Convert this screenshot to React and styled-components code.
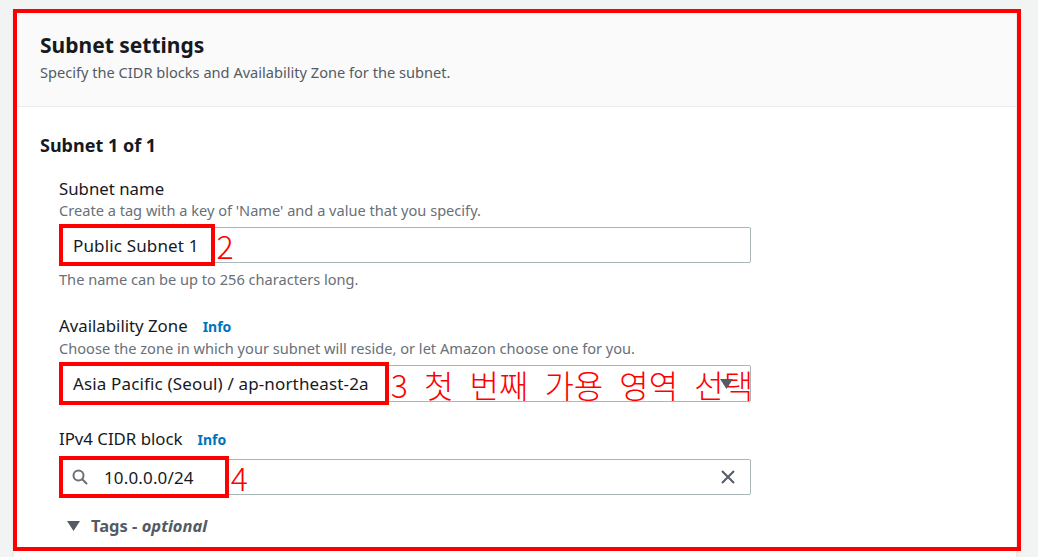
import React from "react";
import styled, { createGlobalStyle } from "styled-components";

const GlobalStyle = createGlobalStyle`
  html, body {
    margin: 0;
    padding: 0;
    background: #f2f3f3;
  }
  body {
    font-family: "Noto Sans", "Open Sans", sans-serif;
    color: #16191f;
  }
  * {
    box-sizing: border-box;
  }
`;

const Page = styled.div`
  position: relative;
  height: 557px;
  overflow: hidden;
  padding: 9px 0 0 13px;
  background: #f2f3f3;
`;

const Panel = styled.section`
  width: 1004px;
  min-height: 600px;
  background: #ffffff;
  border: 1px solid #eaeded;
  box-shadow: 0 1px 1px 0 rgba(0, 28, 36, 0.2);
`;

const Header = styled.header`
  background: #fafafa;
  border-bottom: 1px solid #eaeded;
  padding: 21px 26px 24px;
`;

const Title = styled.h2`
  margin: 0;
  font-size: 21px;
  line-height: 28px;
  font-weight: 700;
  color: #16191f;
`;

const Description = styled.p`
  margin: 3px 0 0;
  font-size: 14.6px;
  line-height: 20px;
  color: #545b64;
`;

const Body = styled.div`
  padding: 26px 26px 0;
`;

const SubTitle = styled.h3`
  margin: 0;
  font-size: 18px;
  line-height: 24px;
  font-weight: 700;
`;

const Fields = styled.div`
  display: flex;
  flex-direction: column;
  gap: 26px;
  padding: 21px 0 0 19px;
`;

const Field = styled.div`
  display: flex;
  flex-direction: column;
  width: 692px;
`;

const Label = styled.div`
  display: flex;
  align-items: baseline;
  font-size: 16.8px;
  line-height: 22px;
  color: #16191f;
`;

const Info = styled.span`
  margin-left: 15px;
  font-size: 14px;
  font-weight: 700;
  color: #0073bb;
`;

const Hint = styled.div`
  font-size: 14.6px;
  line-height: 20px;
  color: #687078;
`;

const Control = styled.div`
  position: relative;
  display: flex;
  align-items: center;
  height: ${(p) => p.$h || 36}px;
  margin-top: ${(p) => p.$mt || 7}px;
  border: 1px solid #aab7b8;
  border-radius: 2px;
  background: #ffffff;
  font-size: 17px;
  letter-spacing: 0.15px;
  color: #16191f;
`;

const Mark = styled.span`
  display: flex;
  align-items: center;
  gap: 16px;
  align-self: stretch;
  flex-shrink: 0;
  margin: -4px 0 -4px -1px;
  padding: 0 ${(p) => p.$pr}px 0 ${(p) => p.$pl || 10}px;
  border: 4px solid #ff0000;
  white-space: nowrap;
`;

const Note = styled.span`
  flex-shrink: 0;
  margin-left: 2px;
  font-family: "Noto Sans CJK KR", sans-serif;
  font-weight: 300;
  font-size: 32px;
  line-height: 32px;
  letter-spacing: 0;
  word-spacing: 9px;
  color: #ff0000;
  white-space: nowrap;
`;

const Trailing = styled.span`
  position: absolute;
  right: ${(p) => p.$r}px;
  top: 50%;
  transform: translateY(-50%);
  display: flex;
  z-index: 1;
`;

const Constraint = styled.div`
  margin-top: 6px;
  font-size: 14.6px;
  line-height: 20px;
  color: #687078;
`;

const Expander = styled.div`
  display: flex;
  align-items: center;
  gap: 11px;
  margin: 20px 0 0 27px;
  font-size: 16.5px;
  line-height: 22px;
  font-weight: 700;
  color: #545b64;

  em {
    font-style: italic;
  }
`;

const Frame = styled.div`
  position: absolute;
  top: 9px;
  left: 13px;
  width: 1008px;
  height: 542px;
  border: 4px solid #ff0000;
  pointer-events: none;
`;

function Caret({ w = 13, h = 10 }) {
  return (
    <svg width={w} height={h} viewBox="0 0 13 10">
      <path d="M0 0 H13 L6.5 10 Z" fill="#545b64" />
    </svg>
  );
}

function SearchIcon() {
  return (
    <svg width="16" height="16" viewBox="0 0 16 16" fill="none">
      <circle cx="6.5" cy="6.5" r="5" stroke="#687078" strokeWidth="2" />
      <path d="M10.2 10.2 L14.5 14.5" stroke="#687078" strokeWidth="2" strokeLinecap="round" />
    </svg>
  );
}

function CloseIcon() {
  return (
    <svg width="14" height="14" viewBox="0 0 14 14" fill="none">
      <path d="M1 1 L13 13 M13 1 L1 13" stroke="#545b64" strokeWidth="2" />
    </svg>
  );
}

export default function App() {
  return (
    <>
      <GlobalStyle />
      <Page>
        <Panel>
          <Header>
            <Title>Subnet settings</Title>
            <Description>
              Specify the CIDR blocks and Availability Zone for the subnet.
            </Description>
          </Header>
          <Body>
            <SubTitle>Subnet 1 of 1</SubTitle>
            <Fields>
              <Field>
                <Label>Subnet name</Label>
                <Hint>Create a tag with a key of 'Name' and a value that you specify.</Hint>
                <Control>
                  <Mark $pr={12}>Public Subnet 1</Mark>
                  <Note>2</Note>
                </Control>
                <Constraint>The name can be up to 256 characters long.</Constraint>
              </Field>

              <Field>
                <Label>
                  Availability Zone<Info>Info</Info>
                </Label>
                <Hint>Choose the zone in which your subnet will reside, or let Amazon choose one for you.</Hint>
                <Control $h={37}>
                  <Mark $pr={16}>Asia Pacific (Seoul) / ap-northeast-2a</Mark>
                  <Note>3 첫 번째 가용 영역 선택</Note>
                  <Trailing $r={17}>
                    <Caret />
                  </Trailing>
                </Control>
              </Field>

              <Field>
                <Label>
                  IPv4 CIDR block<Info>Info</Info>
                </Label>
                <Control $mt={8}>
                  <Mark $pr={31} $pl={9}>
                    <SearchIcon />
                    10.0.0.0/24
                  </Mark>
                  <Note>4</Note>
                  <Trailing $r={15}>
                    <CloseIcon />
                  </Trailing>
                </Control>
              </Field>
            </Fields>
            <Expander>
              <Caret />
              <span>
                Tags - <em>optional</em>
              </span>
            </Expander>
          </Body>
        </Panel>
        <Frame />
      </Page>
    </>
  );
}
